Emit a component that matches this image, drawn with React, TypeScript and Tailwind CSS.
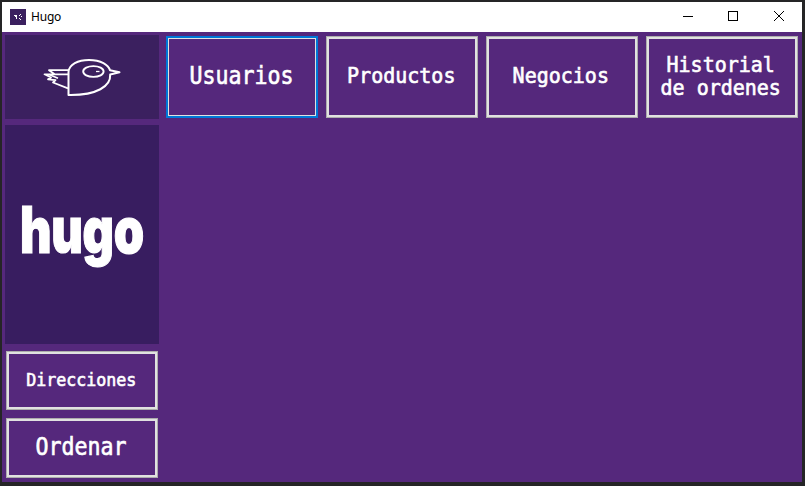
import React from 'react';

type MenuButtonProps = {
  children: React.ReactNode;
  className?: string;
  focused?: boolean;
};

function MenuButton({ children, className = '', focused = false }: MenuButtonProps) {
  const frame = focused
    ? 'border-2 border-[#0078d7]'
    : 'border border-[#adadad]';
  const inner = focused ? 'border border-[#e1e1e1]' : 'border-2 border-[#e1e1e1]';
  return (
    <button className={`flex w-[152px] shrink-0 ${frame} ${className}`}>
      <span className={`flex h-full w-full items-center justify-center pb-0.5 pr-[2px] ${inner}`}>{children}</span>
    </button>
  );
}

function Label({ children, className }: { children: React.ReactNode; className: string }) {
  return (
    <span
      className={`block whitespace-nowrap text-center font-['DejaVu_Sans_Mono',monospace] text-white [-webkit-text-stroke:0.65px_white] ${className}`}
    >
      {children}
    </span>
  );
}

function Bird() {
  return (
    <svg width="154" height="84" viewBox="0 0 154 84" fill="none" stroke="white" strokeWidth="2" strokeLinejoin="round">
      <path d="M63.5 60V37C64 29.5 73 25 84 25C96 25 103.5 30 105 35.3L114.5 37.2L105.2 39.5C106 51 92 60.5 63.5 60Z" />
      <path d="M63 35.2H44L50 39.5M63 39.3H39.5L46 42.5L43 44.3L50.5 45.2L48 47.5L63 53.3" strokeWidth="1.8" />
      <path d="M44 39.5L53 43.2" strokeWidth="1.6" />
      <ellipse cx="88.4" cy="36.5" rx="10.2" ry="5.4" strokeWidth="1.9" />
      <path d="M91 36.5H94.5" strokeWidth="1.3" />
    </svg>
  );
}

export default function App() {
  return (
    <div className="h-[486px] w-[805px] overflow-hidden bg-[#252526] pl-[2px] pt-[2px]">
      <div className="h-[480px] w-[800px] bg-[#55287c]">
        <header className="flex h-[30px] items-center bg-white pl-2">
          <svg width="16" height="16" viewBox="0 0 16 16" shapeRendering="crispEdges">
            <rect width="16" height="16" fill="#3b205f" />
            <path d="M4 6h3v1H4zM5 7h2v1H5zM6 8h1v2H6zM9 6h1v1H9zM10 5h1v1h-1zM11 7h1v1h-1zM9 9h1v1H9zM10 10h1v1h-1z" fill="white" />
          </svg>
          <span className="ml-[5px] font-['Noto_Sans',sans-serif] text-[12px] leading-4 tracking-[-0.2px] text-black">Hugo</span>
          <svg className="ml-auto" width="138" height="30" viewBox="0 0 138 30" fill="none" stroke="black">
            <path d="M19 14.5H29" shapeRendering="crispEdges" />
            <rect x="64.5" y="9.5" width="9" height="9" shapeRendering="crispEdges" />
            <path d="M110 9L120 19M120 9L110 19" />
          </svg>
        </header>

        <main className="flex">
          <aside className="flex w-[160px] flex-col pl-[3px] pt-[3px]">
            <div className="h-[84px] w-[154px] bg-[#3b205f]">
              <Bird />
            </div>
            <div className="mt-[6px] flex h-[219px] w-[154px] items-center justify-center bg-[#381d60]">
              <span className="block origin-center translate-x-[-0.5px] translate-y-[-5.5px] scale-x-[0.76] font-['Inter',sans-serif] text-[64px] font-black leading-none tracking-[-0.4px] text-white [-webkit-text-stroke:1.2px_white]">
                hugo
              </span>
            </div>
            <MenuButton className="ml-px mt-[7px] h-[59px]">
              <Label className="scale-x-[0.9] text-[18.5px] leading-6">Direcciones</Label>
            </MenuButton>
            <MenuButton className="ml-px mt-[8px] h-[60px]">
              <Label className="scale-x-[0.875] text-[24.7px] leading-7">Ordenar</Label>
            </MenuButton>
          </aside>

          <nav className="flex gap-2 pl-1 pt-1">
            <MenuButton focused className="h-[82px]">
              <Label className="scale-x-[0.875] text-[24.7px] leading-7">Usuarios</Label>
            </MenuButton>
            <MenuButton className="h-[82px]">
              <Label className="scale-x-[0.93] text-[21.5px] leading-6">Productos</Label>
            </MenuButton>
            <MenuButton className="h-[82px]">
              <Label className="scale-x-[0.93] text-[21.5px] leading-6">Negocios</Label>
            </MenuButton>
            <MenuButton className="h-[82px]">
              <Label className="scale-x-[0.93] text-[21.5px] leading-[23px]">
                Historial
                <br />
                de ordenes
              </Label>
            </MenuButton>
          </nav>
        </main>
      </div>
    </div>
  );
}
